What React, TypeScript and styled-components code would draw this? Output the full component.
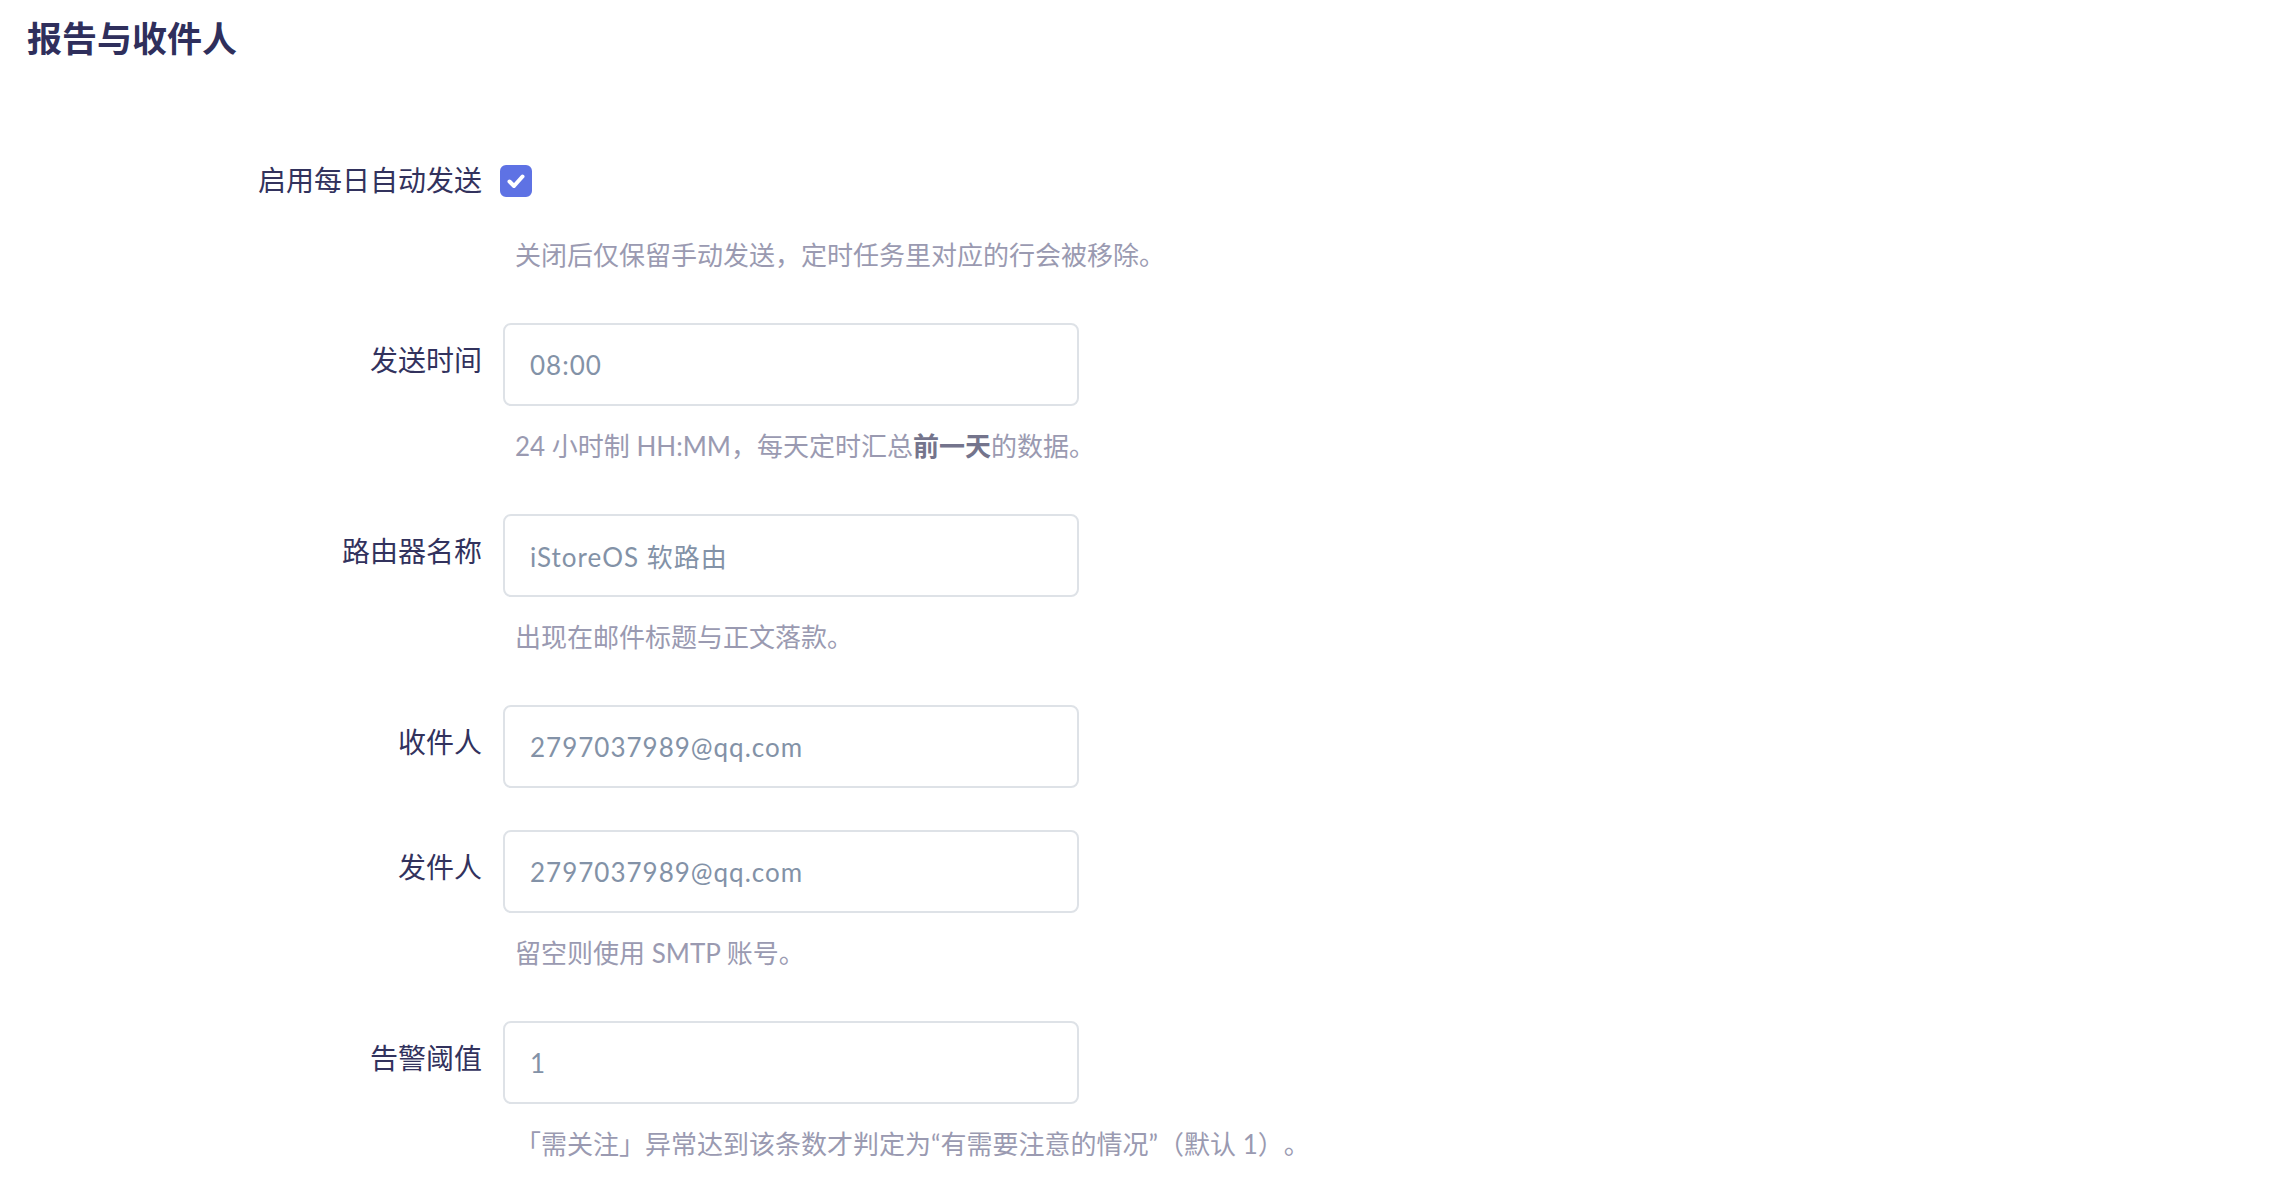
import React, { useState } from "react";
import styled, { createGlobalStyle } from "styled-components";

const GlobalStyle = createGlobalStyle`
    html, body {
        margin: 0;
        padding: 0;
        background: #ffffff;
    }
    body {
        font-family: "Noto Sans CJK SC", "Noto Sans", sans-serif;
        color: #32325d;
    }
`;

const Page = styled.div`
    padding: 12px 0 0 27px;
`;

const Title = styled.h2`
    margin: 0;
    font-size: 35px;
    line-height: 49px;
    font-weight: 700;
    color: #2f2f5c;
`;

const Form = styled.div`
    display: flex;
    flex-direction: column;
    gap: 42px;
    margin-top: 82px;
`;

const Field = styled.div`
    display: grid;
    grid-template-columns: 455px 576px;
    column-gap: 21px;
    row-gap: 14px;
`;

const Label = styled.label<{ $height?: number }>`
    box-sizing: border-box;
    height: ${p => p.$height ?? 83}px;
    padding-top: 15px;
    font-size: 28px;
    line-height: 42px;
    text-align: right;
    color: #32325d;
    white-space: nowrap;
`;

const Control = styled.div`
    display: flex;
    align-items: flex-start;
`;

const Input = styled.input`
    box-sizing: border-box;
    width: 576px;
    height: 83px;
    padding: 0 25px;
    border: 2px solid #dee2e7;
    border-radius: 8px;
    background: #ffffff;
    font-family: "Lato", "Noto Sans CJK SC", sans-serif;
    font-size: 26px;
    letter-spacing: 1px;
    color: #8392a7;
    outline: none;

    &:focus {
        border-color: #b7c1f3;
    }
`;

const Help = styled.div`
    grid-column: 2;
    padding-left: 12px;
    font-family: "Lato", "Noto Sans CJK SC", sans-serif;
    font-size: 26px;
    line-height: 52px;
    color: #9a9ab1;
    white-space: nowrap;
    text-spacing-trim: space-all;

    strong {
        font-weight: 700;
        color: #74748c;
    }
`;

const CheckBox = styled.span<{ $on: boolean }>`
    display: inline-flex;
    align-items: center;
    justify-content: center;
    width: 32px;
    height: 32px;
    margin: 22px 0 0 -3px;
    border-radius: 6px;
    box-sizing: border-box;
    background: ${p => (p.$on ? "#5e72e4" : "#ffffff")};
    border: 2px solid ${p => (p.$on ? "#5e72e4" : "#cad1d7")};
    cursor: pointer;
`;

type Row = {
    label: string;
    value: string;
    help?: React.ReactNode;
};

const rows: Row[] = [
    {
        label: "发送时间",
        value: "08:00",
        help: <>24 小时制 HH:MM，每天定时汇总<strong>前一天</strong>的数据。</>,
    },
    { label: "路由器名称", value: "iStoreOS 软路由", help: "出现在邮件标题与正文落款。" },
    { label: "收件人", value: "2797037989@qq.com" },
    { label: "发件人", value: "2797037989@qq.com", help: "留空则使用 SMTP 账号。" },
    {
        label: "告警阈值",
        value: "1",
        help: "「需关注」异常达到该条数才判定为“有需要注意的情况”（默认 1）。",
    },
];

const App: React.FC = () => {
    const [enabled, setEnabled] = useState(true);

    return (
        <Page>
            <GlobalStyle />
            <Title>报告与收件人</Title>
            <Form>
                <Field>
                    <Label $height={72}>启用每日自动发送</Label>
                    <Control>
                        <CheckBox $on={enabled} onClick={() => setEnabled(v => !v)} role="checkbox" aria-checked={enabled}>
                            {enabled && (
                                <svg width="22" height="22" viewBox="0 0 22 22">
                                    <path d="M4.5 11.5 L9 16 L17.5 6.5" fill="none" stroke="#ffffff" strokeWidth="4" strokeLinecap="round" strokeLinejoin="round" />
                                </svg>
                            )}
                        </CheckBox>
                    </Control>
                    <Help>关闭后仅保留手动发送，定时任务里对应的行会被移除。</Help>
                </Field>
                {rows.map(row => (
                    <Field key={row.label}>
                        <Label>{row.label}</Label>
                        <Control>
                            <Input defaultValue={row.value} />
                        </Control>
                        {row.help && <Help>{row.help}</Help>}
                    </Field>
                ))}
            </Form>
        </Page>
    );
};

export default App;
